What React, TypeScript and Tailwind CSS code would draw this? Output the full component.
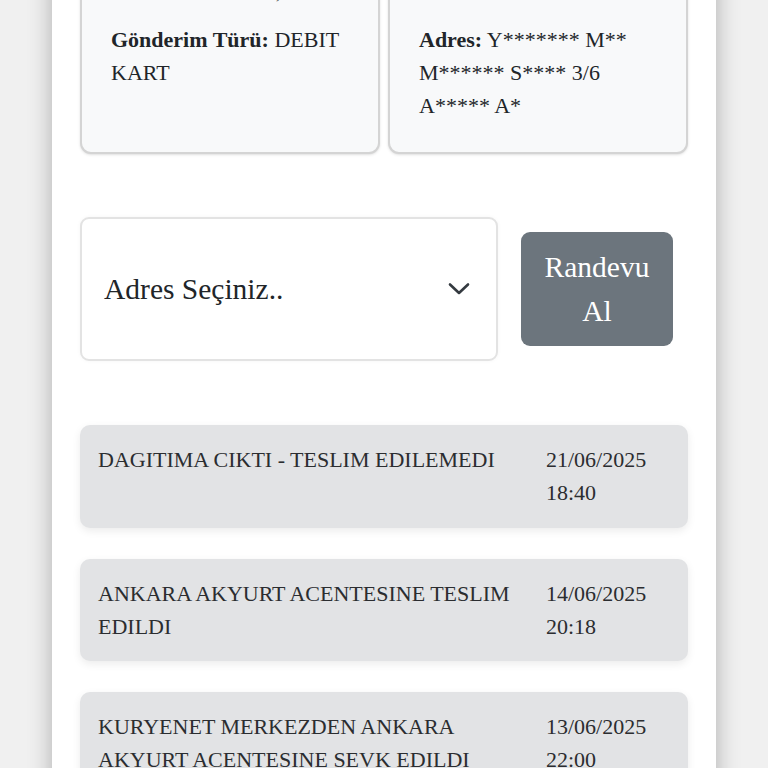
import React from 'react';

type Movement = {
  id: number;
  description: string;
  date: string;
  time: string;
};

const movements: Movement[] = [
  { id: 1, description: 'DAGITIMA CIKTI - TESLIM EDILEMEDI', date: '21/06/2025', time: '18:40' },
  { id: 2, description: 'ANKARA AKYURT ACENTESINE TESLIM EDILDI', date: '14/06/2025', time: '20:18' },
  { id: 3, description: 'KURYENET MERKEZDEN ANKARA AKYURT ACENTESINE SEVK EDILDI', date: '13/06/2025', time: '22:00' },
  { id: 4, description: 'GONDERI KAYDI OLUSTURULDU', date: '12/06/2025', time: '15:12' },
];

function InfoLine({ label, value }: { label: string; value: string }) {
  return (
    <p className="mb-4 last:mb-0">
      <b className="font-bold">{label}:</b> {value}
    </p>
  );
}

function ChevronDown() {
  return (
    <svg width="22" height="14" viewBox="0 0 22 14" fill="none" className="shrink-0">
      <path d="M2 2.5 L11 11 L20 2.5" stroke="#343a40" strokeWidth="2.6" strokeLinecap="round" strokeLinejoin="round" />
    </svg>
  );
}

export default function App() {
  return (
    <div className="h-screen overflow-hidden bg-[#f0f0f0] font-['Liberation_Serif','Times_New_Roman',serif] text-[#212529]">
      <div className="mx-auto min-h-full w-[664px] bg-white shadow-[0_0_22px_rgba(0,0,0,0.28)]">
        <div className="-mt-[135px] px-[28px] pt-[28px] pb-10">
          {/* gönderi bilgileri */}
          <div className="grid grid-cols-2 gap-2 text-[22px] leading-[1.5]">
            <div className="rounded-[11px] border-2 border-[#d4d4d4] bg-[#f8f9fa] px-[29px] pt-[30px] pb-[30px] shadow-sm">
              <InfoLine label="Takip No" value="5823 1146" />
              <InfoLine label="Tarih" value="13/06/2025, 22" />
              <InfoLine label="Gönderim Türü" value="DEBIT KART" />
            </div>
            <div className="rounded-[11px] border-2 border-[#d4d4d4] bg-[#f8f9fa] px-[29px] pt-[30px] pb-[30px] shadow-sm">
              <InfoLine label="Alıcı" value="Y******* M**" />
              <InfoLine label="Telefon" value="0532 *** ** 41" />
              <InfoLine label="Adres" value="Y******* M** M****** S**** 3/6 A***** A*" />
            </div>
          </div>

          {/* adres seçimi */}
          <div className="mt-[63px] flex items-center">
            <div className="flex h-[144px] w-[418px] items-center justify-between rounded-[9px] border-2 border-[#e3e3e3] bg-white pl-[22px] pr-[26px] shadow-[0_0_4px_rgba(0,0,0,0.04)]">
              <span className="text-[29.5px] leading-[1.5]">Adres Seçiniz..</span>
              <ChevronDown />
            </div>
            <button className="ml-[23px] flex h-[114px] w-[152px] items-center justify-center rounded-[9px] bg-[#6c757d] px-4 text-[29.5px] leading-[1.5] text-white">
              Randevu Al
            </button>
          </div>

          {/* hareketler */}
          <div className="mt-16 flex flex-col gap-[31px]">
            {movements.map((m) => (
              <div
                key={m.id}
                className="flex gap-[28px] rounded-[10px] bg-[#e2e3e5] px-[18px] pt-[18px] pb-[18.5px] text-[22px] leading-[1.5] text-[#2b2d30] shadow-[0_3px_8px_rgba(0,0,0,0.08)]"
              >
                <div className="flex-1">{m.description}</div>
                <div className="w-[124px]">
                  {m.date} {m.time}
                </div>
              </div>
            ))}
          </div>
        </div>
      </div>
    </div>
  );
}
